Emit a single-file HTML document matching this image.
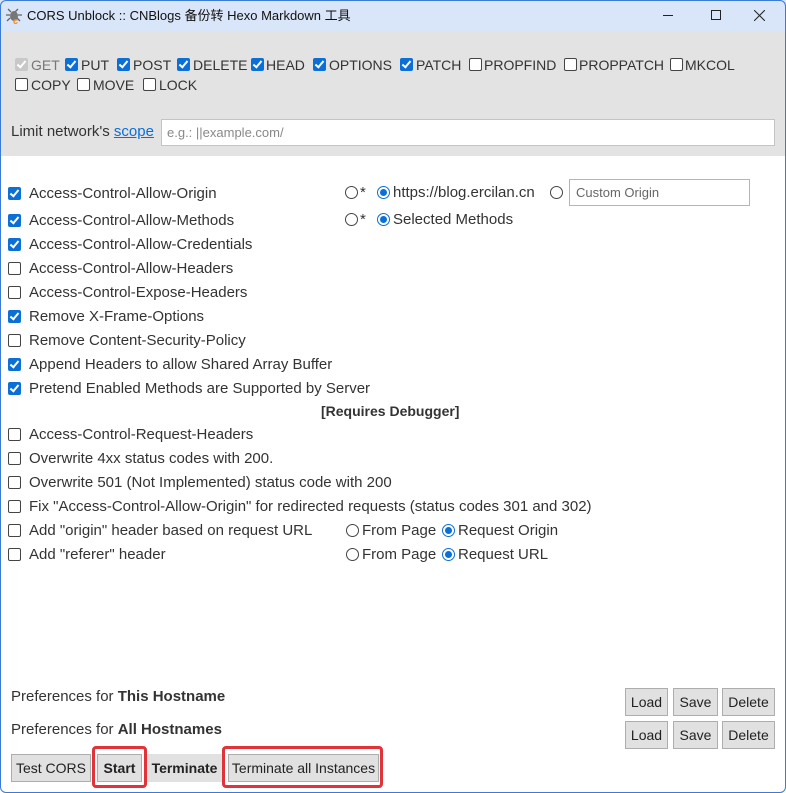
<!DOCTYPE html>
<html><head><meta charset="utf-8"><style>
*{box-sizing:border-box;margin:0;padding:0}
body{width:786px;height:793px;overflow:hidden;background:#fff;font-family:"Liberation Sans","Noto Sans CJK SC",sans-serif;font-size:15px;color:#333;position:relative}
#frame{position:absolute;left:0;top:0;width:786px;height:793px;border:1px solid #3a7bd5;border-radius:6px;z-index:10;pointer-events:none}
#title{position:absolute;left:0;top:0;width:786px;height:31px;background:#d9e5f8;font-size:13px;color:#111}
#gray{position:absolute;left:0;top:31px;width:786px;height:125px;background:#e3e3e3;font-size:14px}
.a{position:absolute;white-space:nowrap;line-height:16px}
.c{position:absolute;width:13px;height:13px;border-radius:2px}
.on{background:#0b6fd6}
.on:after{content:"";position:absolute;left:4px;top:1px;width:3px;height:7px;border:solid #fff;border-width:0 2px 2px 0;transform:rotate(40deg)}
.off{border:1px solid #444;background:#fff}
.dis{background:#c8c8c8}
.dis:after{content:"";position:absolute;left:4px;top:1px;width:3px;height:7px;border:solid #fff;border-width:0 2px 2px 0;transform:rotate(40deg)}
.r{position:absolute;width:13px;height:13px;border-radius:50%;border:1px solid #444;background:#fff}
.rs{border:1px solid #0b6fd6}
.rs:after{content:"";position:absolute;left:2px;top:2px;width:7px;height:7px;border-radius:50%;background:#0b6fd6}
.btn{position:absolute;height:28px;border:1px solid #adadad;background:#e1e1e1;font-size:14px;line-height:26px;text-align:center;color:#222}
.red{position:absolute;border:3px solid #e0333a;border-radius:4px}
</style></head><body>
<div id="frame"></div>
<div id="title">
<svg style="position:absolute;left:5px;top:7px" width="18" height="18" viewBox="0 0 18 18"><g stroke="#666" stroke-width="1.3" fill="none"><path d="M3 2l3 3M13 2l-3 3M1 8h4M13 8h4M2 14l3-3M15 14l-3-3"/></g><ellipse cx="9" cy="9" rx="4" ry="5" fill="#777"/><text x="8" y="17" font-size="9" font-weight="bold" fill="#f0861d" font-family="Liberation Sans">c</text></svg>
<span class="a" style="left:27px;top:8px">CORS Unblock :: CNBlogs 备份转 Hexo Markdown 工具</span>
<div style="position:absolute;left:663px;top:15px;width:10px;height:1px;background:#222"></div>
<div style="position:absolute;left:711px;top:10px;width:10px;height:10px;border:1px solid #222"></div>
<svg style="position:absolute;left:754px;top:10px" width="11" height="11"><path d="M0 0L11 11M11 0L0 11" stroke="#222" stroke-width="1"/></svg>
</div>
<div id="gray">
<div class="c dis" style="left:15px;top:27px"></div><span class="a" style="left:31px;top:26px;color:#777">GET</span>
<div class="c on" style="left:65px;top:27px"></div><span class="a" style="left:81px;top:26px">PUT</span>
<div class="c on" style="left:117px;top:27px"></div><span class="a" style="left:133px;top:26px">POST</span>
<div class="c on" style="left:177px;top:27px"></div><span class="a" style="left:193px;top:26px">DELETE</span>
<div class="c on" style="left:251px;top:27px"></div><span class="a" style="left:266px;top:26px">HEAD</span>
<div class="c on" style="left:313px;top:27px"></div><span class="a" style="left:329px;top:26px">OPTIONS</span>
<div class="c on" style="left:400px;top:27px"></div><span class="a" style="left:416px;top:26px">PATCH</span>
<div class="c off" style="left:469px;top:27px"></div><span class="a" style="left:484px;top:26px">PROPFIND</span>
<div class="c off" style="left:564px;top:27px"></div><span class="a" style="left:579px;top:26px">PROPPATCH</span>
<div class="c off" style="left:670px;top:27px"></div><span class="a" style="left:685px;top:26px">MKCOL</span>
<div class="c off" style="left:15px;top:47px"></div><span class="a" style="left:31px;top:46px">COPY</span>
<div class="c off" style="left:77px;top:47px"></div><span class="a" style="left:93px;top:46px">MOVE</span>
<div class="c off" style="left:143px;top:47px"></div><span class="a" style="left:159px;top:46px">LOCK</span>
<span class="a" style="left:11px;top:93px;font-size:15px">Limit network's <span style="color:#0b6fd6;text-decoration:underline">scope</span></span>
<div style="position:absolute;left:161px;top:88px;width:614px;height:27px;background:#fff;border:1px solid #c4c4c4;font-size:13px;color:#888;line-height:25px;padding-left:5px">e.g.: ||example.com/</div>
</div>

<div class="c on" style="left:8px;top:187px"></div><span class="a" style="left:29px;top:186px">Access-Control-Allow-Origin</span>
<div class="r" style="left:345px;top:186px"></div><span class="a" style="left:360px;top:185px">*</span>
<div class="r rs" style="left:377px;top:186px"></div><span class="a" style="left:393px;top:185px">https://blog.ercilan.cn</span>
<div class="r" style="left:550px;top:186px"></div>
<div style="position:absolute;left:569px;top:179px;width:181px;height:27px;border:1px solid #b5b5b5;font-size:13px;color:#666;line-height:25px;padding-left:6px">Custom Origin</div>
<div class="c on" style="left:8px;top:214px"></div><span class="a" style="left:29px;top:213px">Access-Control-Allow-Methods</span>
<div class="r" style="left:345px;top:213px"></div><span class="a" style="left:360px;top:212px">*</span>
<div class="r rs" style="left:377px;top:213px"></div><span class="a" style="left:393px;top:212px">Selected Methods</span>

<div class="c on" style="left:8px;top:238px"></div><span class="a" style="left:29px;top:237px">Access-Control-Allow-Credentials</span>
<div class="c off" style="left:8px;top:262px"></div><span class="a" style="left:29px;top:261px">Access-Control-Allow-Headers</span>
<div class="c off" style="left:8px;top:286px"></div><span class="a" style="left:29px;top:285px">Access-Control-Expose-Headers</span>
<div class="c on" style="left:8px;top:310px"></div><span class="a" style="left:29px;top:309px">Remove X-Frame-Options</span>
<div class="c off" style="left:8px;top:334px"></div><span class="a" style="left:29px;top:333px">Remove Content-Security-Policy</span>
<div class="c on" style="left:8px;top:358px"></div><span class="a" style="left:29px;top:357px">Append Headers to allow Shared Array Buffer</span>
<div class="c on" style="left:8px;top:382px"></div><span class="a" style="left:29px;top:381px">Pretend Enabled Methods are Supported by Server</span>
<span class="a" style="left:321px;top:403px;font-weight:bold;font-size:14px">[Requires Debugger]</span>
<div class="c off" style="left:8px;top:428px"></div><span class="a" style="left:29px;top:427px">Access-Control-Request-Headers</span>
<div class="c off" style="left:8px;top:452px"></div><span class="a" style="left:29px;top:451px">Overwrite 4xx status codes with 200.</span>
<div class="c off" style="left:8px;top:476px"></div><span class="a" style="left:29px;top:475px">Overwrite 501 (Not Implemented) status code with 200</span>
<div class="c off" style="left:8px;top:500px"></div><span class="a" style="left:29px;top:499px">Fix "Access-Control-Allow-Origin" for redirected requests (status codes 301 and 302)</span>
<div class="c off" style="left:8px;top:524px"></div><span class="a" style="left:29px;top:523px">Add "origin" header based on request URL</span>
<div class="r" style="left:346px;top:524px"></div><span class="a" style="left:362px;top:523px">From Page</span>
<div class="r rs" style="left:442px;top:524px"></div><span class="a" style="left:458px;top:523px">Request Origin</span>
<div class="c off" style="left:8px;top:548px"></div><span class="a" style="left:29px;top:547px">Add "referer" header</span>
<div class="r" style="left:346px;top:548px"></div><span class="a" style="left:362px;top:547px">From Page</span>
<div class="r rs" style="left:442px;top:548px"></div><span class="a" style="left:458px;top:547px">Request URL</span>

<span class="a" style="left:11px;top:689px">Preferences for <b>This Hostname</b></span>
<span class="a" style="left:11px;top:722px">Preferences for <b>All Hostnames</b></span>
<div class="btn" style="left:625px;top:688px;width:43px">Load</div>
<div class="btn" style="left:673px;top:688px;width:45px">Save</div>
<div class="btn" style="left:722px;top:688px;width:53px">Delete</div>
<div class="btn" style="left:625px;top:721px;width:43px">Load</div>
<div class="btn" style="left:673px;top:721px;width:45px">Save</div>
<div class="btn" style="left:722px;top:721px;width:53px">Delete</div>
<div class="btn" style="left:11px;top:754px;width:80px">Test CORS</div>
<div class="btn" style="left:97px;top:754px;width:45px;font-weight:bold">Start</div>
<div class="btn" style="left:147px;top:754px;width:75px;font-weight:bold;border-color:#e1e1e1">Terminate</div>
<div class="btn" style="left:228px;top:754px;width:151px">Terminate all Instances</div>
<div class="red" style="left:92px;top:746px;width:55px;height:42px"></div>
<div class="red" style="left:222px;top:746px;width:161px;height:42px"></div>
</body></html>
